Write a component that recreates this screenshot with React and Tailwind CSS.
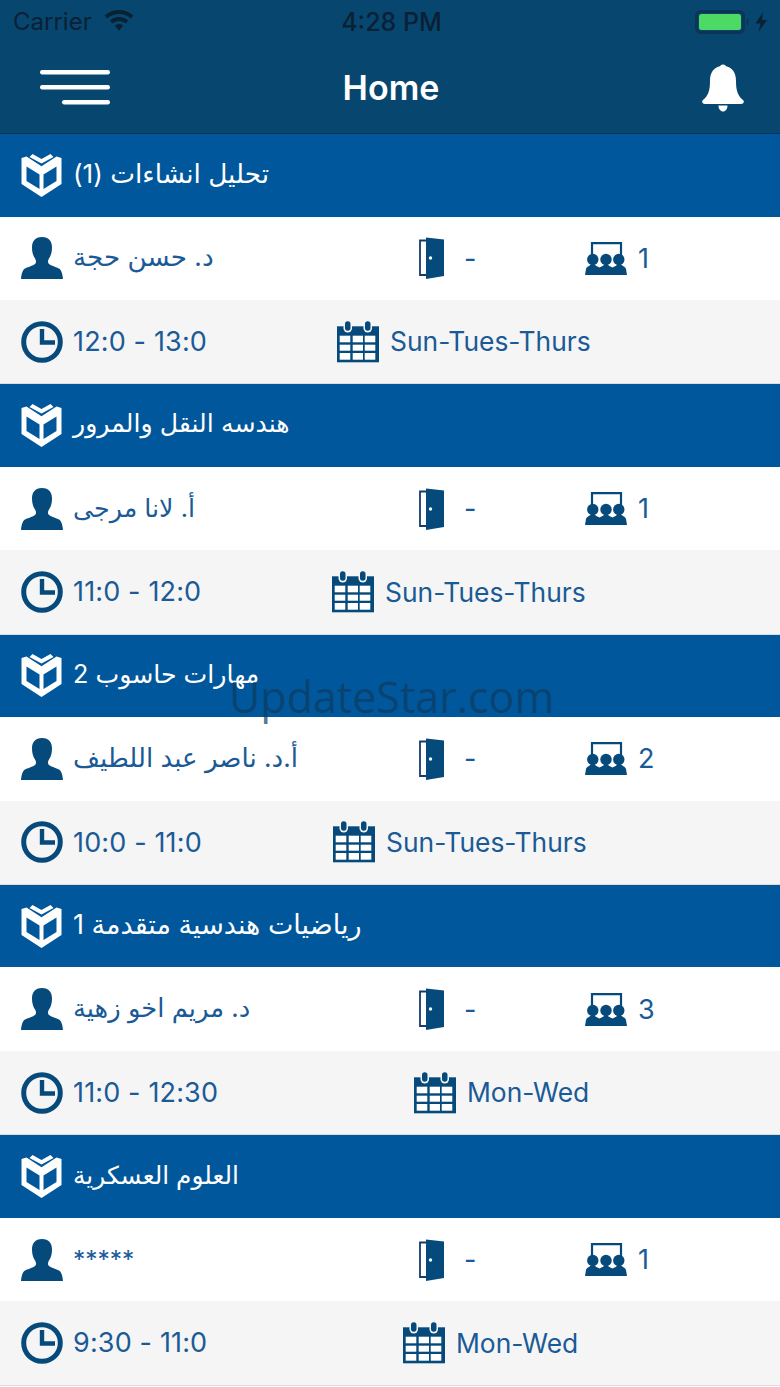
const ink = "#064a7c";

function Book() {
  return (
    <svg width="41" height="43" viewBox="0 0 40 43" className="shrink-0">
      <path fill="#fff" fillRule="evenodd" d="M0 4 L5 2.5 L20 12.2 L35 2.5 L40 4 V30 L20 43 L0 30Z M5 12.5 V27 L18 35 V20.5Z M35 12.5 V27 L22 35 V20.5Z" />
      <path fill="#fff" d="M11 0 L20 5 L29 0 L32 3 L20 9.6 L8 3Z" />
    </svg>
  );
}

function Person() {
  return (
    <svg width="42" height="42" viewBox="0 0 42 42" className="shrink-0" fill={ink}>
      <path d="M21 0 C28 0 31 4.5 31 10.5 C31 15 30 18.5 28 21.5 C27 23 26.5 25 27.5 26.5 C29.5 28.8 34 29.5 38 31.5 C40 32.8 41.5 36 42 42 H0 C0.5 36 2 32.8 4 31.5 C8 29.5 12.5 28.8 14.5 26.5 C15.5 25 15 23 14 21.5 C12 18.5 11 15 11 10.5 C11 4.5 14 0 21 0Z" />
    </svg>
  );
}

function Door() {
  return (
    <svg width="25" height="42" viewBox="0 0 25 42" className="shrink-0">
      <path fill="none" stroke="#173a6e" strokeWidth="1.8" d="M7 3.5 H1 V38 H7" />
      <path fill={ink} d="M7 0.5 L25 2.5 V39 L7 42Z" />
      <circle cx="11.5" cy="21" r="1.7" fill="#fff" />
    </svg>
  );
}

function Classroom() {
  return (
    <svg width="42" height="33" viewBox="0 0 42 33" className="shrink-0">
      <path fill="none" stroke={ink} strokeWidth="2.2" d="M7 17 V1.2 H36 V17" />
      <g fill={ink}>
        <circle cx="7.8" cy="17.5" r="5.7" />
        <circle cx="21" cy="17.5" r="5.7" />
        <circle cx="33.8" cy="17.5" r="5.7" />
        <path d="M0 33 L1 27 C1.5 24.5 5 24 8 21 C10.5 24 12.5 24.5 14.5 25.5 C16.5 24.5 18.5 24 21 21 C23.5 24 25.5 24.5 27.5 25.5 C29.5 24.5 31.5 24 34 21 C37 24 40.5 24.5 41 27 L42 33Z" />
      </g>
    </svg>
  );
}

function Clock() {
  return (
    <svg width="42" height="42" viewBox="0 0 42 42" className="shrink-0">
      <circle cx="21" cy="21" r="18.3" fill="none" stroke={ink} strokeWidth="5" />
      <path fill="none" stroke={ink} strokeWidth="4.4" d="M21 8 V21.5 H34" />
    </svg>
  );
}

function Calendar() {
  return (
    <svg width="42" height="42" viewBox="0 0 42 42" className="shrink-0">
      <rect x="0" y="5.3" width="42" height="36" fill={ink} />
      <rect x="6.5" y="-1" width="8.5" height="12.5" rx="4.2" fill="#f5f5f5" />
      <rect x="26.5" y="-1" width="8.5" height="12.5" rx="4.2" fill="#f5f5f5" />
      <rect x="8" y="0.3" width="5.5" height="9.5" rx="2.7" fill={ink} />
      <rect x="28" y="0.3" width="5.5" height="9.5" rx="2.7" fill={ink} />
      <g fill="#fff">
        <rect x="2.7" y="14.7" width="10.6" height="6.6" /><rect x="15.7" y="14.7" width="10.3" height="6.6" /><rect x="27.7" y="14.7" width="10.6" height="6.6" />
        <rect x="2.7" y="23.7" width="10.6" height="6" /><rect x="15.7" y="23.7" width="10.3" height="6" /><rect x="27.7" y="23.7" width="10.6" height="6" />
        <rect x="2.7" y="32" width="10.6" height="6.7" /><rect x="15.7" y="32" width="10.3" height="6.7" /><rect x="27.7" y="32" width="10.6" height="6.7" />
      </g>
    </svg>
  );
}

function Block({ course, courseSize, teacher, teacherSize, section, time, days, timeW }) {
  return (
    <section className="h-[250.33px] flex flex-col">
      <div className="h-[82.5px] shrink-0 bg-[#01579b] flex items-center pl-[21px] text-white">
        <Book />
        <span dir="rtl" className={`ml-[11px] mb-[3px] leading-none ${courseSize}`}>{course}</span>
      </div>
      <div className="h-[83.5px] shrink-0 bg-white flex items-center pl-[21px]">
        <Person />
        <span className="ml-[10px] w-[346px] mb-[3px]">
          <span dir="rtl" className={`inline-block leading-none ${teacherSize}`}>{teacher}</span>
        </span>
        <Door />
        <span className="ml-[20px] w-[121px]">-</span>
        <Classroom />
        <span className="ml-[11px]">{section}</span>
      </div>
      <div className="flex-1 bg-[#f5f5f5] border-b border-[#dcdcdc] flex items-center pl-[21px]">
        <div className={`flex items-center ${timeW}`}>
          <Clock />
          <span className="ml-[10px] tracking-[0.15px]">{time}</span>
        </div>
        <Calendar />
        <span className="ml-[11px] text-[26.4px]">{days}</span>
      </div>
    </section>
  );
}

const rows = [
  { course: "تحليل انشاءات (1)", courseSize: "text-[26.3px]", teacher: "د. حسن حجة", teacherSize: "text-[26.2px]", section: "1", time: "12:0 - 13:0", days: "Sun-Tues-Thurs", timeW: "w-[316px]" },
  { course: "هندسه النقل والمرور", courseSize: "text-[25.2px]", teacher: "أ. لانا مرجى", teacherSize: "text-[25.3px]", section: "1", time: "11:0 - 12:0", days: "Sun-Tues-Thurs", timeW: "w-[311px]" },
  { course: "مهارات حاسوب 2", courseSize: "text-[25.2px]", teacher: "أ.د. ناصر عبد اللطيف", teacherSize: "text-[26.1px]", section: "2", time: "10:0 - 11:0", days: "Sun-Tues-Thurs", timeW: "w-[312px]" },
  { course: "رياضيات هندسية متقدمة 1", courseSize: "text-[27px]", teacher: "د. مريم اخو زهية", teacherSize: "text-[25.8px]", section: "3", time: "11:0 - 12:30", days: "Mon-Wed", timeW: "w-[393px]" },
  { course: "العلوم العسكرية", courseSize: "text-[24.8px]", teacher: "*****", teacherSize: "text-[24.5px]", section: "1", time: "9:30 - 11:0", days: "Mon-Wed", timeW: "w-[382px]" },
];

export default function App() {
  return (
    <div className="relative w-[780px] h-[1387px] overflow-hidden bg-white text-[#1a5a96] text-[27px] leading-none font-['Inter','DejaVu_Sans',sans-serif]">
      <header className="h-[134px] bg-[#07476f] border-b border-[#06375a] flex flex-col">
        <div className="h-[44px] grid grid-cols-[1fr_auto_1fr] items-center pl-[13px] pr-[10px] text-[#0a2035] text-[24px]">
          <div className="flex items-center">
            <span>Carrier</span>
            <svg width="30" height="22" viewBox="0 0 30 22" className="ml-[12px] mb-[2px]" fill="#0a2035">
              <path d="M15 0 C9.5 0 4.5 2 0.5 5.5 L3.2 8.5 C6.5 5.6 10.5 4 15 4 C19.5 4 23.5 5.6 26.8 8.5 L29.5 5.5 C25.5 2 20.5 0 15 0Z" />
              <path d="M15 7 C11.5 7 8.3 8.3 5.7 10.5 L8.5 13.5 C10.3 12 12.5 11 15 11 C17.5 11 19.7 12 21.5 13.5 L24.3 10.5 C21.7 8.3 18.5 7 15 7Z" />
              <path d="M15 14 C13.5 14 12 14.6 10.8 15.5 L15 21 L19.2 15.5 C18 14.6 16.5 14 15 14Z" />
            </svg>
          </div>
          <span className="text-center font-medium text-[25px]">4:28 PM</span>
          <svg width="75" height="24" viewBox="0 0 75 24" className="justify-self-end">
            <rect x="1.5" y="1.5" width="47" height="21" rx="4.5" fill="none" stroke="#0b3455" strokeWidth="3" />
            <rect x="4" y="4" width="42" height="16" rx="2.5" fill="#4cd964" />
            <rect x="51.5" y="9" width="2" height="6" rx="1" fill="#0b3455" />
            <path d="M68 2 L60.5 13.5 H65.5 L63.5 22 L72 10 H67Z" fill="#0a2035" />
          </svg>
        </div>
        <div className="flex-1 grid grid-cols-[1fr_auto_1fr] items-center pl-[40px] pr-[36px] pb-[2px]">
          <svg width="70" height="36" viewBox="0 0 70 36">
            <rect x="0" y="0" width="70" height="4.5" rx="2.2" fill="#fff" />
            <rect x="0" y="15" width="70" height="4.5" rx="2.2" fill="#fff" />
            <rect x="22" y="30" width="48" height="4.5" rx="2.2" fill="#fff" />
          </svg>
          <h1 className="text-white text-[34px] font-semibold -ml-[2px]">Home</h1>
          <svg width="42" height="48" viewBox="0 0 42 48" fill="#fff" className="justify-self-end">
            <circle cx="21" cy="3.5" r="3" />
            <path d="M21 2 C11.5 2 8 9 8 17 C8 27 6 32 1 36 C-0.5 37.5 0 39.5 3 40 H39 C42 39.5 42.5 37.5 41 36 C36 32 34 27 34 17 C34 9 30.5 2 21 2Z" />
            <path d="M16.5 41.5 H25.5 C25.5 45 23.5 47.5 21 47.5 C18.5 47.5 16.5 45 16.5 41.5Z" />
          </svg>
        </div>
      </header>
      {rows.map((r) => (
        <Block key={r.course} {...r} />
      ))}
      <div className="absolute left-[229px] top-[671px] text-[43px] leading-[52px] text-[#0d3a5e]/70 font-['Open_Sans',sans-serif]">
        UpdateStar.com
      </div>
    </div>
  );
}
